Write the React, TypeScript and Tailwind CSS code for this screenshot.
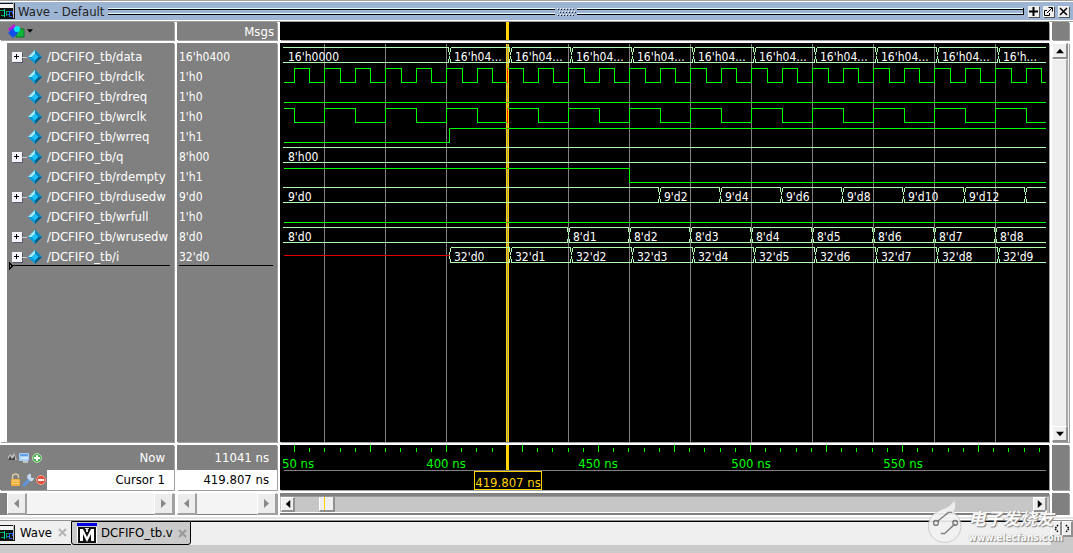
import React, { useState } from 'react';
import clsx from 'clsx';

interface Signal {
    name: string;
    value: string;
    bus?: boolean;
}

const signals: Signal[] = [
    { name: '/DCFIFO_tb/data', value: "16'h0400", bus: true },
    { name: '/DCFIFO_tb/rdclk', value: "1'h0" },
    { name: '/DCFIFO_tb/rdreq', value: "1'h0" },
    { name: '/DCFIFO_tb/wrclk', value: "1'h0" },
    { name: '/DCFIFO_tb/wrreq', value: "1'h1" },
    { name: '/DCFIFO_tb/q', value: "8'h00", bus: true },
    { name: '/DCFIFO_tb/rdempty', value: "1'h1" },
    { name: '/DCFIFO_tb/rdusedw', value: "9'd0", bus: true },
    { name: '/DCFIFO_tb/wrfull', value: "1'h0" },
    { name: '/DCFIFO_tb/wrusedw', value: "8'd0", bus: true },
    { name: '/DCFIFO_tb/i', value: "32'd0", bus: true },
];

const START = 3;
const END = 765;
const STEP = 61; // 20 ns
const CURSOR = 227;

// n positions, one every 20 ns
const every = (from: number, n: number) => Array.from({ length: n }, (_, i) => from + i * STEP);

const gridLines = every(44, 12);

const clockPath = (top: number, first: number, half: number, high: boolean) => {
    let d = `M${START} ${high ? top : top + 14}`;
    for (let k = 0; first + k * half < END; k++) {
        high = !high;
        d += `H${Math.ceil(first + k * half)}V${high ? top : top + 14}`;
    }
    return d + `H${END}`;
};

interface BusProps {
    row: number;
    edges: number[];
    labels: string[];
    from?: number;
}
function Bus({ row, edges, labels, from = START }: BusProps) {
    const t = row * 20 + 4;
    const b = t + 15;
    const points = [from, ...edges, END];

    return (
        <g>
            <g stroke="#b0ffb0" fill="none" transform="translate(0.5 0.5)">
                {points.slice(0, -1).map((p, i) => {
                    const last = i === points.length - 2;
                    const x1 = i === 0 && from === START ? p - 1 : p + 1;
                    const x2 = last ? END : points[i + 1] - 1;
                    return (
                        <React.Fragment key={p}>
                            <path d={`M${x1} ${t}H${x2}M${x1} ${b}H${x2}`} />
                            {x1 > p && <path d={`M${x1} ${t}V${t + 4}M${p} ${t + 4}V${t + 7}M${p} ${b - 7}V${b - 4}M${x1} ${b - 4}V${b}`} />}
                            {!last && <path d={`M${x2} ${t}V${t + 4}M${x2} ${b - 4}V${b}`} />}
                        </React.Fragment>
                    );
                })}
            </g>
            {labels.map((l, i) => (
                <text key={i} x={points[i] + 5} y={t + 14} fill="#fff">
                    {l}
                </text>
            ))}
        </g>
    );
}

function WaveChart() {
    const count = (n: number, fn: (i: number) => string) => Array.from({ length: n }, (_, i) => fn(i));

    return (
        <svg className="block h-full w-full text-[12px]" shapeRendering="crispEdges">
            <g transform="translate(0.5 0.5)">
                {gridLines.map((x) => (
                    <line key={x} x1={x} x2={x} y1="0" y2="100%" stroke="#808080" />
                ))}
                <line x1={CURSOR} x2={CURSOR} y1="0" y2="100%" stroke="#ffd200" strokeWidth="3" />
                <line x1={CURSOR} x2={CURSOR} y1="0" y2="100%" stroke="#a89a60" />
                <g stroke="#00ff00" fill="none">
                    <path d={clockPath(25, 13.5, 15.25, false)} />
                    <path d={`M${START} 59H${END}`} />
                    <path d={clockPath(65, 13.5, 30.5, true)} />
                    <path d={`M${START} 99H169V85H${END}`} />
                    <path d={`M${START} 125H349V139H${END}`} />
                    <path d={`M${START} 179H${END}`} />
                </g>
                <path d={`M${START} 212H169`} stroke="#e00000" />
            </g>
            <Bus row={0} edges={every(169, 10)} labels={["16'h0000", ...count(9, () => "16'h04..."), "16'h..."]} />
            <Bus row={5} edges={[]} labels={["8'h00"]} />
            <Bus row={7} edges={every(379, 7)} labels={["9'd0", ...count(6, (i) => `9'd${2 * i + 2}`)]} />
            <Bus row={9} edges={every(288, 8)} labels={["8'd0", ...count(8, (i) => `8'd${i + 1}`)]} />
            <Bus row={10} from={169} edges={every(230, 9)} labels={count(10, (i) => `32'd${i}`)} />
            <path transform="translate(0.5 0)" d={`M${CURSOR} 25v15M${CURSOR} 65v15M${CURSOR} 59v1M${CURSOR} 85v1M${CURSOR} 125v1M${CURSOR} 179v1`} stroke="#ff2000" />
        </svg>
    );
}

function Ruler() {
    const ticks = Array.from({ length: 50 }, (_, i) => i);

    return (
        <svg className="block h-full w-full text-[13px]" shapeRendering="crispEdges">
            <g transform="translate(0.5 0)">
                {ticks.map((i) => (
                    <line key={i} x1={Math.ceil(13.5 + i * 15.2)} x2={Math.ceil(13.5 + i * 15.2)} y1={i % 5 === 0 ? 0 : 3} y2="7" stroke="#00ff00" />
                ))}
                <line x1={START} x2={END} y1="25.5" y2="25.5" stroke="#808080" />
                <line x1={CURSOR} x2={CURSOR} y1="0" y2="25" stroke="#ffd200" strokeWidth="3" />
                <rect x="194" y="26.5" width="67" height="18" fill="#000" stroke="#ffd200" />
            </g>
            <g fill="#00ff00">
                <text x="2" y="23">50 ns</text>
                <text x="166" y="23" textAnchor="middle">400 ns</text>
                <text x="318" y="23" textAnchor="middle">450 ns</text>
                <text x="471" y="23" textAnchor="middle">500 ns</text>
                <text x="623" y="23" textAnchor="middle">550 ns</text>
            </g>
            <text x="228" y="42" textAnchor="middle" fill="#ffd200">419.807 ns</text>
        </svg>
    );
}

function WaveIcon() {
    return (
        <svg width="15" height="16" viewBox="0 0 15 16" className="shrink-0" shapeRendering="crispEdges">
            <rect width="15" height="16" fill="#111" />
            <rect width="13" height="4" y="1" fill="#f4f4f4" />
            <rect x="13" width="1" height="15" fill="#bbb" />
            <path d="M0 7.5h4v5H1M6 12.5V8.5h3v4" fill="none" stroke="#00b050" />
            <path d="M7 11.5h2v-3h3v2M9 13.5h3" fill="none" stroke="#2060ff" />
            <path d="M4.5 6v8" stroke="#00d8b0" />
        </svg>
    );
}

function Diamond() {
    return (
        <svg width="16" height="16" viewBox="0 0 16 16" className="shrink-0">
            <path d="M8 1l7 7-7 7-7-7z" fill="#0a9bd8" />
            <path d="M8 1l7 7h-4L8 5z" fill="#0b84c0" />
            <path d="M8 1L1 8h4l3-3z" fill="#a5ecff" />
            <path d="M15 8l-7 7v-4l3-3z" fill="#045a80" />
            <path d="M8 4.500l3.500 3.500L8 11.500 4.500 8z" fill="#1cc0f5" />
        </svg>
    );
}

function Triangle({ dir, className }: { dir: 'left' | 'right' | 'up' | 'down'; className?: string }) {
    const paths = { left: 'M7 0v9L2 4.500z', right: 'M2 0v9l5-4.500z', up: 'M0 7h9L4.500 2z', down: 'M0 2h9L4.500 7z' };
    return (
        <svg width="9" height="9" viewBox="0 0 9 9" className={className}>
            <path d={paths[dir]} fill="currentColor" />
        </svg>
    );
}

function PaneScroll() {
    const button = 'flex w-5 shrink-0 items-center justify-center border border-r-2 border-b-2 border-t-white border-l-white border-r-[#a0a0a0] border-b-[#a0a0a0] bg-[#ececec] text-[#888]';
    return (
        <div className="flex h-[22px] bg-[#f4f4f4]">
            <button type="button" aria-label="Scroll left" className={button}>
                <Triangle dir="left" />
            </button>
            <div className="flex-1 border-b border-[#808080]" />
            <button type="button" aria-label="Scroll right" className={button}>
                <Triangle dir="right" />
            </button>
        </div>
    );
}

function Grip({ className }: { className?: string }) {
    return (
        <div className={clsx('flex flex-1 flex-col gap-[3px]', className)}>
            <div className="h-[2px] border-t border-b border-t-[#e4f8ff] border-b-black" />
            <div className="h-[2px] border-t border-b border-t-[#e4f8ff] border-b-black" />
        </div>
    );
}

const titleButton = 'flex size-[11px] items-center justify-center bg-[#efefef] shadow-[1px_1px_0_#555]';
const pane = 'min-h-0 min-w-0 overflow-hidden shadow-[1px_1px_0_#a0a0a0]';
const rawButton = 'flex shrink-0 items-center justify-center border-t border-l border-r-2 border-b-2 border-t-white border-l-white border-r-[#909090] border-b-[#909090] bg-[#efefef]';

function TitleBar() {
    return (
        <header className="flex h-[22px] shrink-0 items-center border-t border-b border-[#a0a0a0] bg-[#9db4d2] pr-1 shadow-[inset_0_1px_0_#fff,inset_0_-1px_0_#fff]">
            <WaveIcon />
            <h1 className="ml-[3px] pt-px text-[13px] text-[#222]">Wave - Default</h1>
            <Grip className="ml-1" />
            <svg width="22" height="9" viewBox="0 0 22 9" className="shrink-0" shapeRendering="crispEdges">
                <path d="M2 1.500h18M4 4.500h18M2 7.500h18" stroke="#fff" strokeDasharray="1 2" />
                <path d="M3 2.500h18M5 5.500h17M3 8.500h18" stroke="#223" strokeDasharray="1 2" />
            </svg>
            <Grip className="mr-1 border-r border-black" />
            <div className="flex gap-[4px]">
                <button type="button" aria-label="Zoom pane" className={titleButton}>
                    <svg width="9" height="9" viewBox="0 0 9 9">
                        <path d="M4.500 0v9M0 4.500h9" stroke="#000" strokeWidth="2" />
                    </svg>
                </button>
                <button type="button" aria-label="Undock" className={titleButton}>
                    <svg width="9" height="9" viewBox="0 0 9 9" fill="none" stroke="#000">
                        <path d="M3 3.500H.5v5h5V6M3 6l5-5M4.500.5h4v4" />
                    </svg>
                </button>
                <button type="button" aria-label="Close pane" className={titleButton}>
                    <svg width="9" height="9" viewBox="0 0 9 9">
                        <path d="M1 1l7 7M8 1L1 8" stroke="#000" strokeWidth="1.500" />
                    </svg>
                </button>
            </div>
        </header>
    );
}

function FooterIcons() {
    return (
        <svg width="36" height="12" viewBox="0 0 36 12" className="ml-[7px]">
            <path d="M1 8V5l2-3 2 2 2-3 3 7z" fill="#bbb" />
            <path d="M1 8l2-4 2 3 3-3v4z" fill="#444" />
            <rect x="12" y="1" width="10" height="8" rx="1" fill="#a9cdf5" />
            <path d="M13 3h8" stroke="#4e8fe0" strokeWidth="1.500" />
            <path d="M14 6h7M16 10h5" stroke="#fff" />
            <circle cx="30" cy="6" r="4.500" fill="#4cb050" stroke="#b4e0b0" />
            <path d="M30 3v6M27 6h6" stroke="#fff" strokeWidth="2" />
        </svg>
    );
}

function CursorIcons() {
    return (
        <svg width="37" height="14" viewBox="0 0 37 14" className="ml-[10px]">
            <path d="M2.500 6V4a3 3 0 0 1 6 0v1" fill="none" stroke="#d8c8a0" strokeWidth="1.500" />
            <rect x="1" y="6" width="9" height="7" rx="1" fill="#f3ae3c" />
            <path d="M2 8h7M2 10.500h7" stroke="#ffd680" />
            <path d="M14 12l6-6" stroke="#5b95e0" strokeWidth="3" strokeLinecap="round" />
            <path d="M18 6a3 3 0 0 1 3-5v3l1 1h2a3 3 0 0 1-4 3z" fill="#c3d8ef" />
            <circle cx="31" cy="7" r="4.500" fill="#e2503c" stroke="#f0a090" />
            <path d="M28 7h6" stroke="#fff" strokeWidth="2" />
        </svg>
    );
}

function Watermark() {
    return (
        <div className="pointer-events-none absolute right-[10px] bottom-[9px] flex items-end opacity-90">
            <svg width="37" height="46" viewBox="0 0 38 48">
                <path d="M27 1c3 8 1 11-1 14a17 17 0 1 1-16-1c6-4 14-4 17-13z" fill="#f2f2f2" stroke="#c4c4c4" />
                <path d="M10 24l11-9h4M28 27L17 37h-4" fill="none" stroke="#777" strokeWidth="1.500" />
                <circle cx="8" cy="26" r="2.500" fill="none" stroke="#777" strokeWidth="1.500" />
                <circle cx="28" cy="26" r="2.500" fill="none" stroke="#777" strokeWidth="1.500" />
            </svg>
            <div className="ml-1 text-white [text-shadow:1px_1px_1px_#777,0_0_1px_#999]">
                <div className="font-['Noto_Sans_CJK_SC',sans-serif] text-[17px] leading-5 font-bold italic">电子发烧友</div>
                <div className="mt-1 text-[10px] leading-3 font-bold">www.elecfans.com</div>
            </div>
        </div>
    );
}

export default function App() {
    const [tab, setTab] = useState('wave');

    return (
        <div className="relative flex h-screen flex-col overflow-hidden bg-[#cacaca] font-['DejaVu_Sans_Condensed','DejaVu_Sans',sans-serif] text-[13px] leading-5 text-white">
            <TitleBar />

            <main className="grid min-h-0 flex-1 grid-cols-[174px_100px_1fr_17px] grid-rows-[18px_1fr_45px_22px] gap-[3px] bg-white pr-1">
                <div className={clsx(pane, 'flex items-center bg-[#808080] pl-[7px]')}>
                    <svg width="18" height="16" viewBox="0 0 18 16">
                        <path d="M1 6l6-5 3 4-6 5z" fill="#c018d8" />
                        <path d="M9 6h8v8H9z" fill="#10b840" stroke="#067820" />
                        <path d="M6 5l5 5-5 5-5-5z" fill="#1050e8" />
                        <circle cx="10" cy="6" r="3" fill="#00e8f8" />
                    </svg>
                    <Triangle dir="down" className="ml-[2px] size-[6px] text-black" />
                </div>
                <div className={clsx(pane, 'bg-[#808080] pr-[3px] text-right leading-5')}>Msgs</div>
                <div className={clsx(pane, 'bg-black pl-[226px]')}>
                    <div className="h-full w-[3px] bg-[#ffd200]" />
                </div>
                <div className={clsx(pane, 'bg-[#808080]')} />

                <div className={clsx(pane, 'bg-white pl-[7px]')}>
                    <div className="h-full bg-[#808080] pt-1">
                        <ul>
                            {signals.map((s) => (
                                <li key={s.name} className="flex h-5 items-center">
                                    <span className="flex w-5 shrink-0 items-center pl-[5px]">
                                        {s.bus && (
                                            <>
                                                <button type="button" aria-label={`Expand ${s.name}`} className="flex size-[10px] shrink-0 items-center justify-center bg-[#f4f4fa] shadow-[1px_1px_0_#555a70]">
                                                    <svg width="6" height="6" viewBox="0 0 6 6" shapeRendering="crispEdges">
                                                        <path d="M2.500 0v5M0 2.500h5" stroke="#000" />
                                                    </svg>
                                                </button>
                                                <span className="h-px flex-1 bg-[#c8c8c8]" />
                                            </>
                                        )}
                                    </span>
                                    <Diamond />
                                    <span className="ml-1 whitespace-nowrap">{s.name}</span>
                                </li>
                            ))}
                        </ul>
                        <svg className="-mt-[5px] block h-2 w-full" shapeRendering="crispEdges">
                            <path d="M2.500 1v6l3-3z" fill="none" stroke="#000" />
                            <path d="M5 3.500h158" stroke="#000" />
                        </svg>
                    </div>
                </div>
                <div className={clsx(pane, 'bg-[#808080] pt-1')}>
                    <ul className="pl-[2px] text-[12px] leading-5">
                        {signals.map((s) => (
                            <li key={s.name}>{s.value}</li>
                        ))}
                    </ul>
                    <div className="-mt-[2px] mr-1 ml-[2px] h-px bg-black" />
                </div>
                <div className={clsx(pane, 'bg-black')}>
                    <WaveChart />
                </div>
                <div className={clsx(pane, 'flex flex-col bg-[#efefef] pr-px')}>
                    <button type="button" aria-label="Scroll up" className={clsx(rawButton, 'h-4')}>
                        <Triangle dir="up" className="size-2 text-black" />
                    </button>
                    <div className="flex-1 border-t border-r-2 border-[#a8a8a8] border-t-white" />
                    <button type="button" aria-label="Scroll down" className={clsx(rawButton, 'h-4')}>
                        <Triangle dir="down" className="size-2 text-black" />
                    </button>
                </div>

                <div className={clsx(pane, 'bg-[#808080]')}>
                    <div className="flex h-[25px] items-center justify-between pr-[9px]">
                        <FooterIcons />
                        <span>Now</span>
                    </div>
                    <div className="flex h-5 items-center text-black">
                        <CursorIcons />
                        <span className="flex-1 bg-white pr-[9px] text-right">Cursor 1</span>
                    </div>
                </div>
                <div className={clsx(pane, 'bg-[#808080] text-right')}>
                    <div className="h-[25px] pr-2 leading-[25px]">11041 ns</div>
                    <div className="bg-white pr-2 text-black">419.807 ns</div>
                </div>
                <div className={clsx(pane, 'bg-black')}>
                    <Ruler />
                </div>
                <div className={clsx(pane, 'bg-[#808080]')} />

                <div className={clsx(pane, 'bg-[#808080] pl-[7px]')}>
                    <PaneScroll />
                </div>
                <div className={clsx(pane)}>
                    <PaneScroll />
                </div>
                <div className={clsx(pane, 'bg-[#808080] pt-[3px] pb-[2px]')}>
                    <div className="flex h-full border-t border-b border-t-[#999] border-b-white bg-[#c6c6c6] px-px pr-[2px]">
                        <button type="button" aria-label="Scroll waves left" className={clsx(rawButton, 'w-[14px]')}>
                            <Triangle dir="left" className="size-2 text-black" />
                        </button>
                        <div className="flex flex-1 pl-6">
                            <div className="w-4 border-r-2 border-b-2 border-l border-l-white border-r-[#909090] border-b-[#909090] bg-[#efefef] pl-1">
                                <div className="h-full w-px bg-[#ffd200]" />
                            </div>
                        </div>
                        <button type="button" aria-label="Scroll waves right" className={clsx(rawButton, 'w-[14px]')}>
                            <Triangle dir="right" className="size-2 text-black" />
                        </button>
                    </div>
                </div>
                <div className={clsx(pane, 'bg-[#808080]')} />
            </main>

            <div className="h-[6px] shrink-0 border-t-2 border-b border-t-white border-b-[#909090] bg-[#e4e4e4] shadow-[inset_0_-1px_0_#fff]" />

            <nav className="mb-[8px] flex h-6 shrink-0 text-black">
                <div className="flex min-w-0 flex-1 bg-[#efefef]">
                    <div className="flex w-[71px] items-center border-b border-black">
                        <WaveIcon />
                        <button type="button" onClick={() => setTab('wave')} aria-pressed={tab === 'wave'} className="ml-[5px]">
                            Wave
                        </button>
                        <button type="button" aria-label="Close Wave" className="ml-[6px]">
                            <svg width="9" height="9" viewBox="0 0 9 9">
                                <path d="M1 1l7 7M8 1L1 8" stroke="#b4b4b4" strokeWidth="2" />
                            </svg>
                        </button>
                    </div>
                    <div className="flex w-[120px] items-center rounded-b-[3px] border border-black bg-[#cacaca] pl-[5px]">
                        <svg width="20" height="20" viewBox="0 0 20 20" className="shrink-0" shapeRendering="crispEdges">
                            <rect width="20" height="3" fill="#0000e0" />
                            <rect y="4" width="20" height="16" fill="#fff" />
                            <path d="M1 4h18v16H1z" fill="#111" />
                            <path d="M3 18V6h3l4 8 4-8h3v12h-3v-7l-4 8-4-8v7z" fill="#fff" shapeRendering="auto" />
                            <path d="M8 5l2 5 2-5z" fill="#ddd" />
                        </svg>
                        <button type="button" onClick={() => setTab('source')} aria-pressed={tab === 'source'} className="ml-1">
                            DCFIFO_tb.v
                        </button>
                        <button type="button" aria-label="Close DCFIFO_tb.v" className="ml-[5px]">
                            <svg width="9" height="9" viewBox="0 0 9 9">
                                <path d="M1 1l7 7M8 1L1 8" stroke="#989898" strokeWidth="2" />
                            </svg>
                        </button>
                    </div>
                    <div className="flex-1 border-t border-black" />
                </div>
                <button type="button" aria-label="Previous tab" className={clsx(rawButton, 'h-4 w-[11px]')}>
                    <svg width="7" height="9" viewBox="0 0 7 9">
                        <path d="M5 1L2 4.500 5 8" fill="none" stroke="#000" strokeDasharray="1.500 1" strokeWidth="1.500" />
                    </svg>
                </button>
                <button type="button" aria-label="Next tab" className={clsx(rawButton, 'h-4 w-[11px]')}>
                    <svg width="7" height="9" viewBox="0 0 7 9">
                        <path d="M2 1l3 3.500L2 8" fill="none" stroke="#000" strokeDasharray="1.500 1" strokeWidth="1.500" />
                    </svg>
                </button>
            </nav>

            <Watermark />
        </div>
    );
}
